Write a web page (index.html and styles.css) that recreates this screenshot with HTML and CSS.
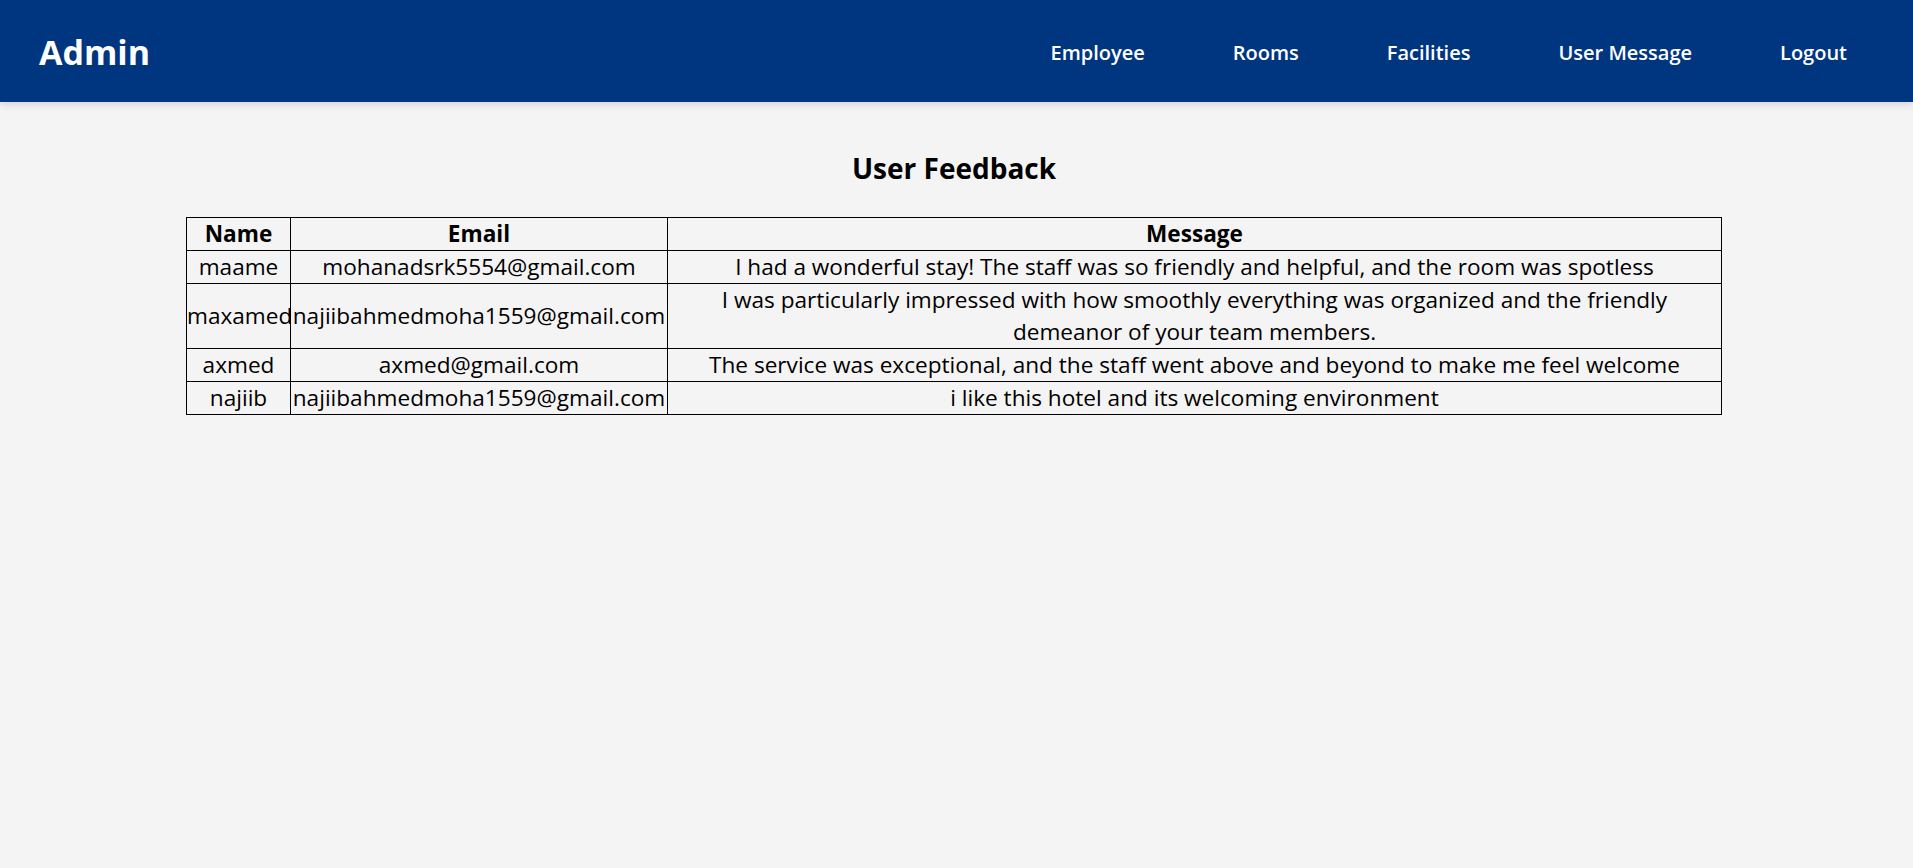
FILE: index.html
```html
<!DOCTYPE html>
<html lang="en">
<head>
<meta charset="utf-8">
<title>Admin - User Feedback</title>
<link rel="stylesheet" href="styles.css">
</head>
<body>
<header class="topbar">
  <div class="brand">Admin</div>
  <nav class="nav">
    <a href="#">Employee</a>
    <a href="#">Rooms</a>
    <a href="#">Facilities</a>
    <a href="#">User Message</a>
    <a href="#">Logout</a>
  </nav>
</header>
<main class="content">
  <h2 class="title">User Feedback</h2>
  <table class="feedback">
    <thead>
      <tr><th class="c-name">Name</th><th class="c-email">Email</th><th class="c-msg">Message</th></tr>
    </thead>
    <tbody>
      <tr><td>maame</td><td>mohanadsrk5554@gmail.com</td><td>I had a wonderful stay! The staff was so friendly and helpful, and the room was spotless</td></tr>
      <tr><td>maxamed</td><td>najiibahmedmoha1559@gmail.com</td><td>I was particularly impressed with how smoothly everything was organized and the friendly demeanor of your team members.</td></tr>
      <tr><td>axmed</td><td>axmed@gmail.com</td><td>The service was exceptional, and the staff went above and beyond to make me feel welcome</td></tr>
      <tr><td>najiib</td><td>najiibahmedmoha1559@gmail.com</td><td>i like this hotel and its welcoming environment</td></tr>
    </tbody>
  </table>
</main>
</body>
</html>
```
FILE: styles.css
```css
* { box-sizing: border-box; }
html, body { margin: 0; padding: 0; }
body {
  background: #f4f4f4;
  font-family: "Open Sans", "Noto Sans", sans-serif;
  color: #000;
}
.topbar {
  height: 102px;
  background: #003580;
  display: flex;
  align-items: center;
  justify-content: space-between;
  padding: 2px 66px 0 39px;
  box-shadow: 0 2px 8px rgba(0, 0, 0, 0.15);
}
.brand {
  color: #fff;
  font-weight: 700;
  font-size: 34px;
}
.nav {
  display: flex;
  gap: 88px;
}
.nav a {
  color: #fff;
  text-decoration: none;
  font-weight: 600;
  font-size: 20px;
}
.content {
  padding: 47px 5px 0 0;
}
.title {
  text-align: center;
  font-size: 28px;
  font-weight: 700;
  line-height: 38px;
  margin: 0 0 30px;
}
.feedback {
  width: 1536px;
  margin: 0 auto;
  border-collapse: collapse;
  table-layout: fixed;
  font-size: 22.6px;
}
.c-name { width: 104px; }
.c-email { width: 377px; }
.feedback th,
.feedback td {
  border: 1px solid #000;
  padding: 0;
  text-align: center;
  line-height: 32px;
  white-space: normal;
}
.feedback th { font-weight: 700; }
```
